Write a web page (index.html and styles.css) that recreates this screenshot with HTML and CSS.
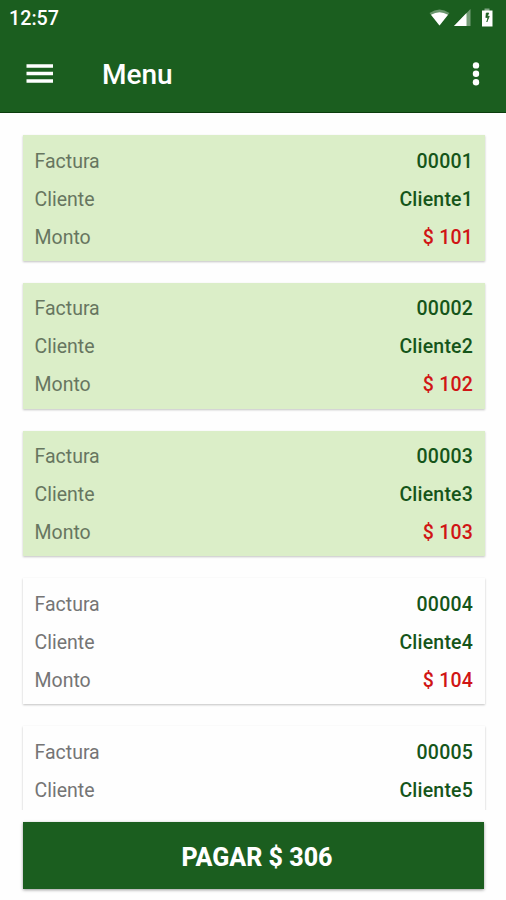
FILE: index.html
```html
<!DOCTYPE html>
<html lang="es">

<head>
    <meta charset="UTF-8">
    <meta name="viewport" content="width=device-width, initial-scale=1.0">
    <title>Menu</title>
    <link rel="stylesheet" href="styles.css">
</head>

<body>
    <header class="header">
        <div class="status-bar">
            <span class="clock">12:57</span>
            <svg class="status-icons" width="66" height="20" viewBox="0 0 66 20">
                <path d="M0.5 5Q10.5 -2 20.5 5L10.5 17.5Z" fill="#fff" opacity="0.35" />
                <path d="M2 6.8Q10.5 1.5 19 6.8L10.5 17.5Z" fill="#fff" />
                <path d="M25 18L41.5 1V18Z" fill="#fff" opacity="0.4" />
                <path d="M25 18L37.5 5V18Z" fill="#fff" />
                <path d="M55.5 0.5H60.5V3H55.5Z" fill="#fff" opacity="0.45" />
                <path d="M53 2.5H63.5V18.5H53Z" fill="#fff" />
                <path d="M59.8 5H57.3L56.8 9.5H59L57.8 14L60.3 8.3H58.3Z" fill="#1b5e1f" stroke="#1b5e1f" stroke-width="0.7" />
            </svg>
        </div>
        <div class="toolbar">
            <svg class="menu-icon" width="27" height="20" viewBox="0 0 27 20">
                <path d="M0.5 0.3H27V3.7H0.5ZM0.5 7.8H27V11.2H0.5ZM0.5 15.3H27V18.7H0.5Z" fill="#fff" />
            </svg>
            <h1 class="title">Menu</h1>
            <svg class="more-icon" width="8" height="24" viewBox="0 0 8 24">
                <circle cx="4" cy="3.4" r="3.2" fill="#fff" />
                <circle cx="4" cy="11.8" r="3.2" fill="#fff" />
                <circle cx="4" cy="20.2" r="3.2" fill="#fff" />
            </svg>
        </div>
    </header>

    <main class="list">
        <div class="card selected">
            <div class="row"><span>Factura</span><b>00001</b></div>
            <div class="row"><span>Cliente</span><b>Cliente1</b></div>
            <div class="row"><span>Monto</span><b class="amount">$ 101</b></div>
        </div>
        <div class="card selected">
            <div class="row"><span>Factura</span><b>00002</b></div>
            <div class="row"><span>Cliente</span><b>Cliente2</b></div>
            <div class="row"><span>Monto</span><b class="amount">$ 102</b></div>
        </div>
        <div class="card selected">
            <div class="row"><span>Factura</span><b>00003</b></div>
            <div class="row"><span>Cliente</span><b>Cliente3</b></div>
            <div class="row"><span>Monto</span><b class="amount">$ 103</b></div>
        </div>
        <div class="card">
            <div class="row"><span>Factura</span><b>00004</b></div>
            <div class="row"><span>Cliente</span><b>Cliente4</b></div>
            <div class="row"><span>Monto</span><b class="amount">$ 104</b></div>
        </div>
        <div class="card">
            <div class="row"><span>Factura</span><b>00005</b></div>
            <div class="row"><span>Cliente</span><b>Cliente5</b></div>
        </div>
    </main>

    <footer class="footer">
        <button class="pay">PAGAR $ 306</button>
    </footer>
</body>

</html>
```
FILE: styles.css
```css
* {
    box-sizing: border-box;
}

body {
    font-family: Roboto, sans-serif;
    display: flex;
    flex-direction: column;
    height: 100vh;
    margin: 0;
    overflow: hidden;
    background-color: #fefefe;
}

.header {
    flex: none;
    height: 113px;
    background-color: #1b5e1f;
    border-bottom: 1px solid #0b3d0d;
    color: white;
}

.status-bar {
    display: flex;
    justify-content: space-between;
    height: 37px;
    padding: 8px 11px 0 9px;
}

.clock {
    font-size: 19.7px;
    font-weight: 500;
    line-height: 21px;
}

.toolbar {
    display: flex;
    align-items: center;
    height: 73px;
    padding: 0 26px;
}

.title {
    flex: 1;
    margin: 3px 0 0 49px;
    font-size: 28px;
    font-weight: 500;
    line-height: 32px;
}

.list {
    flex: none;
    display: flex;
    flex-direction: column;
    gap: 22px;
    height: 697px;
    padding: 22.3px 21px 0 22.5px;
    overflow: hidden;
}

.card {
    flex: none;
    height: 125.7px;
    padding: 7px 12px 0;
    box-shadow: 0 1px 2px rgba(0, 0, 0, 0.24);
    background-color: #fefefe;
}

.card.selected {
    background-color: #dbeec8;
}

.row {
    display: flex;
    justify-content: space-between;
    align-items: center;
    height: 38px;
    color: #757575;
    font-size: 19.5px;
}

.selected .row {
    color: #677660;
}

.row b {
    color: #15551a;
    font-weight: 500;
    letter-spacing: 0.2px;
}

.row .amount {
    color: #d01515;
}

.footer {
    padding: 12px 22px 12px 23px;
}

.pay {
    display: block;
    width: 100%;
    height: 67px;
    padding: 3px 0 0 7px;
    border: none;
    box-shadow: 0 1px 3px rgba(0, 0, 0, 0.4);
    background-color: #1b5e1f;
    color: white;
    font-family: inherit;
    font-size: 25px;
    font-weight: 800;
    cursor: pointer;
}
```
